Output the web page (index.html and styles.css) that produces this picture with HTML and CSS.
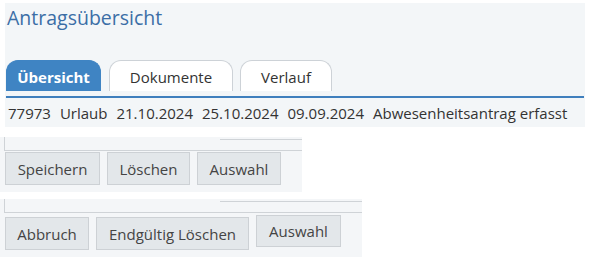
FILE: index.html
```html
<!DOCTYPE html>
<html lang="de">
<head>
    <meta charset="UTF-8">
    <title>Antragsübersicht</title>
    <link rel="stylesheet" href="styles.css">
</head>
<body>
    <div class="panel">
        <h1 class="panel-title">Antragsübersicht</h1>
        <div class="tabs">
            <div class="tab tab-active">Übersicht</div>
            <div class="tab tab-docs">Dokumente</div>
            <div class="tab tab-log">Verlauf</div>
        </div>
        <div class="tab-line"></div>
        <div class="row">
            <span>77973</span>
            <span>Urlaub</span>
            <span>21.10.2024</span>
            <span>25.10.2024</span>
            <span>09.09.2024</span>
            <span>Abwesenheitsantrag erfasst</span>
        </div>
    </div>

    <div class="toolbar toolbar-save">
        <div class="toolbar-head"><div class="toolbar-rule"></div></div>
        <div class="buttons">
            <button class="btn btn-save">Speichern</button>
            <button class="btn btn-del">Löschen</button>
            <button class="btn btn-pick">Auswahl</button>
        </div>
    </div>

    <div class="toolbar toolbar-confirm">
        <div class="toolbar-head"><div class="toolbar-rule"></div></div>
        <div class="buttons">
            <button class="btn btn-cancel">Abbruch</button>
            <button class="btn btn-final">Endgültig Löschen</button>
            <button class="btn btn-pick btn-raised">Auswahl</button>
        </div>
    </div>
</body>
</html>
```

FILE: styles.css
```css
body {
    margin: 0;
    font-family: "Open Sans", "Liberation Sans", sans-serif;
    background: #ffffff;
    color: #333;
}

.panel {
    width: 580px;
    height: 124px;
    margin: 3px 0 0 5px;
    background: #f3f6f8;
    box-sizing: border-box;
    padding-top: 2px;
}

.panel-title {
    margin: 0 0 0 2px;
    font-size: 19.5px;
    font-weight: normal;
    color: #3b6ea6;
    line-height: 26px;
}

.tabs {
    display: flex;
    margin-top: 29px;
    padding-left: 1px;
}

.tab {
    height: 31px;
    box-sizing: border-box;
    border: 1px solid #cdd2d7;
    border-bottom: none;
    border-radius: 12px 12px 0 0;
    background: #ffffff;
    font-size: 15px;
    line-height: 32px;
    text-align: center;
    color: #333;
    margin-right: 7px;
}

.tab-active {
    width: 95px;
    background: #3f84c3;
    border-color: #3f84c3;
    color: #ffffff;
    font-weight: bold;
    margin-right: 8px;
}

.tab-docs { width: 124px; }
.tab-log { width: 92px; }

.tab-line {
    height: 2px;
    margin: 5px 1px 0 1px;
    background: #3f7fbd;
}

.row {
    display: flex;
    gap: 9px;
    padding: 5px 0 0 3px;
    font-size: 15px;
    line-height: 20px;
    color: #333;
}

.toolbar {
    background: #f4f6f8;
    box-sizing: border-box;
}

.toolbar-save {
    width: 302px;
    height: 55px;
    margin-top: 10px;
}

.toolbar-confirm {
    width: 362px;
    height: 58px;
    margin-top: 7px;
}

.toolbar-head {
    display: flex;
    height: 13px;
    margin-left: 4px;
    border-left: 1px solid #cfd3d7;
    border-bottom: 1px solid #cfd3d7;
}

.toolbar-rule {
    margin: 2px 0 0 auto;
    width: 82px;
    border-top: 1px solid #cfd3d7;
}

.toolbar-confirm .toolbar-rule {
    width: 142px;
}

.buttons {
    display: flex;
    align-items: flex-start;
    gap: 7px;
    padding: 1px 0 0 5px;
}

.btn {
    height: 33px;
    box-sizing: border-box;
    border: 1px solid #cdd1d5;
    background: #e3e7ea;
    font-family: "Open Sans", "Liberation Sans", sans-serif;
    font-size: 15px;
    color: #444;
    padding: 0;
}

.btn-save { width: 95px; }
.btn-del { width: 83px; }
.btn-pick { width: 84px; }
.btn-cancel { width: 84px; margin-top: 3px; }
.btn-final { width: 153px; margin-top: 3px; }
.btn-raised { width: 85px; height: 32px; margin-top: 1px; }
```
